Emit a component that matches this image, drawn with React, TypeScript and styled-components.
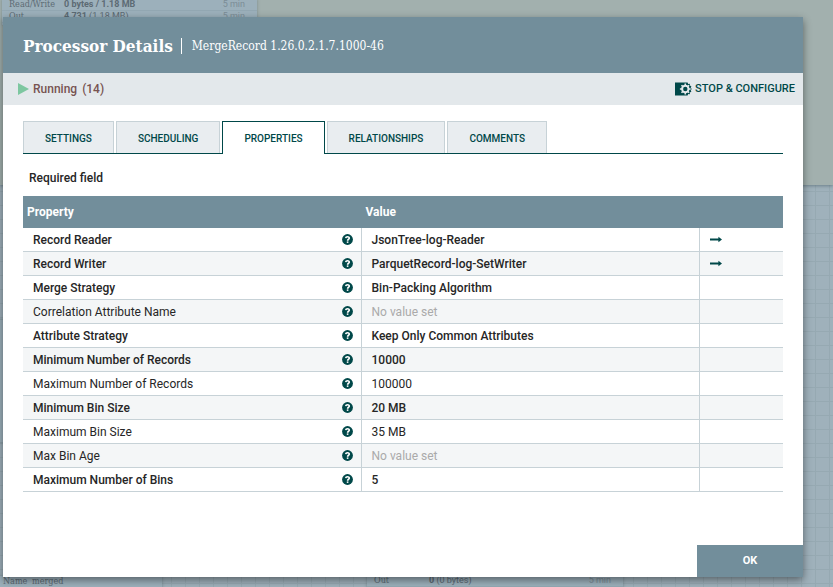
import React, { useState } from "react";
import styled, { createGlobalStyle } from "styled-components";

const slate = "#728e9b";
const teal = "#004849";
const line = "#c7d2d7";
const slab = `"DejaVu Serif Condensed", "DejaVu Serif", serif`;

const GlobalStyle = createGlobalStyle`
  *, *::before, *::after { box-sizing: border-box; }
  body {
    margin: 0;
    font-family: Roboto, sans-serif;
    font-size: 12px;
    color: #262626;
  }
`;

const Page = styled.div`
  position: relative;
  display: flex;
  min-height: 100vh;
  padding: 17px 30px 10px 3px;
  overflow: hidden;
`;

/* Flow canvas behind the dialog: every node has its own place on it. */
const Canvas = styled.div`
  position: absolute;
  inset: 0;
  overflow: hidden;
  background-color: #9fb1bb;
  background-image:
    linear-gradient(to right, #96a9b2 1px, transparent 1px),
    linear-gradient(to bottom, #96a9b2 1px, transparent 1px);
  background-size: 14px 14px;
  background-position: 3px 9px;
`;

const Region = styled.div`
  position: absolute;
  left: 0;
  right: 0;
  top: 0;
  height: 185px;
  background: #a2b0ae;
  box-shadow: 0 1px 3px rgba(60, 80, 90, 0.5);
`;

const Node = styled.div<{ $x: number; $y: number; $w: number; $h?: number }>`
  position: absolute;
  left: ${(p) => p.$x}px;
  top: ${(p) => p.$y}px;
  width: ${(p) => p.$w}px;
  height: ${(p) => p.$h ?? 26}px;
  background: #9cb0bb;
  box-shadow: 0 0 3px rgba(60, 80, 90, 0.4);
  font-size: 9px;
  line-height: 10px;
  color: #5c6b74;
`;

const Stat = styled.div<{ $label?: number }>`
  display: grid;
  grid-template-columns: ${(p) => p.$label ?? 55}px 1fr auto;
  height: 12px;
  padding: 0 12px 0 7px;
  border-bottom: 1px solid #93a8b3;
`;

const StatName = styled.span`
  font-family: ${slab};
  font-size: 9px;
`;

const StatTime = styled.span`
  color: #7b8c96;
`;

const Dialog = styled.section`
  position: relative;
  flex: 1;
  display: flex;
  flex-direction: column;
  background: #fff;
  box-shadow: 0 3px 8px rgba(0, 0, 0, 0.45);
`;

const Header = styled.header`
  display: flex;
  align-items: center;
  height: 56px;
  padding: 2px 20px 0;
  background: ${slate};
  color: #fff;
  font-family: ${slab};
`;

const Title = styled.h1`
  margin: 0;
  font-size: 17px;
  line-height: 24px;
  font-weight: 700;
`;

const Subtitle = styled.span`
  margin-left: 8px;
  padding-left: 10px;
  border-left: 1px solid #fff;
  font-size: 12px;
  line-height: 16px;
`;

const StatusBar = styled.div`
  display: flex;
  align-items: center;
  justify-content: space-between;
  height: 32px;
  padding: 0 8px 0 15px;
  background: #e3e8eb;
`;

const Status = styled.div`
  display: flex;
  align-items: center;
  gap: 4px;
  color: #775351;
  font-weight: 500;
`;

const Count = styled.span`
  margin-left: 1px;
`;

const PlainButton = styled.button`
  display: flex;
  align-items: center;
  gap: 3px;
  padding: 0;
  border: 0;
  background: none;
  color: ${teal};
  font: 500 11px/16px Roboto, sans-serif;
  cursor: pointer;
`;

const Body = styled.div`
  flex: 1;
  padding: 16px 20px;
`;

const Tabs = styled.div`
  display: flex;
  gap: 2px;
  height: 33px;
  border-bottom: 1px solid ${teal};
`;

const Tab = styled.button<{ $active: boolean }>`
  height: ${(p) => (p.$active ? 33 : 32)}px;
  padding: 2px 21px 0;
  border: 1px solid ${(p) => (p.$active ? teal : line)};
  border-bottom: 0;
  background: ${(p) => (p.$active ? "#fff" : "#e9edf0")};
  color: ${teal};
  font: 500 10px/16px Roboto, sans-serif;
  cursor: pointer;
`;

const Required = styled.p`
  margin: 16px 6px 10px;
  font-size: 12px;
  line-height: 16px;
  font-weight: 500;
`;

const Table = styled.table`
  width: 100%;
  table-layout: fixed;
  border-collapse: separate;
  border-spacing: 0;
  font-size: 12px;
  line-height: 16px;
`;

const LinkCol = styled.col`
  width: 83px;
`;

const HeadCell = styled.th`
  height: 32px;
  padding: 0 4px;
  background: ${slate};
  color: #fff;
  font-weight: 700;
  text-align: left;
`;

const Row = styled.tr<{ $required: boolean }>`
  font-weight: ${(p) => (p.$required ? 500 : 400)};
  &:nth-child(even) {
    background: #f4f6f7;
  }
`;

const Cell = styled.td<{ $unset?: boolean }>`
  height: 24px;
  padding: 0 8px 0 10px;
  border-bottom: 1px solid ${line};
  border-right: 1px solid ${line};
  color: ${(p) => (p.$unset ? "#aaa" : "inherit")};
  &:last-child {
    border-right: 0;
  }
`;

const NameLine = styled.div`
  display: flex;
  align-items: center;
  justify-content: space-between;
`;

const IconButton = styled.button`
  display: block;
  padding: 0;
  border: 0;
  background: none;
  color: ${teal};
  cursor: pointer;
  svg {
    display: block;
  }
`;

const Footer = styled.footer`
  display: flex;
  justify-content: flex-end;
`;

const OkButton = styled.button`
  width: 106px;
  height: 32px;
  border: 0;
  background: ${slate};
  color: #fff;
  font: 700 11px/16px Roboto, sans-serif;
  cursor: pointer;
`;

const PlayIcon = () => (
  <svg width="11" height="12" viewBox="0 0 11 12" aria-hidden="true">
    <path d="M0 0L11 6L0 12Z" fill="#7dc7a0" />
  </svg>
);

const ConfigureIcon = () => (
  <svg width="17" height="14" viewBox="0 0 17 14" aria-hidden="true">
    <path
      d="M0 0.5H12.6L13.2 2L14.8 1.8L15 3.6L16.4 4.4L15.6 5.9L17 7L15.6 8.1L16.4 9.6L15 10.4L14.8 12.2L13.2 12L12.6 13.5H0Z"
      fill={teal}
    />
    <g stroke="#e3e8eb" fill="none">
      <circle cx="10.3" cy="7" r="3.2" strokeWidth="2" />
      <path
        d="M10.3 1.6V4M10.3 10V12.4M4.9 7H7.3M13.3 7H15.7M6.5 3.2L8.2 4.9M12.4 9.1L14.1 10.8M6.5 10.8L8.2 9.1M12.4 4.9L14.1 3.2"
        strokeWidth="1.6"
      />
    </g>
  </svg>
);

const HelpIcon = () => (
  <svg width="11" height="11" viewBox="0 0 11 11" aria-hidden="true">
    <circle cx="5.5" cy="5.5" r="5.4" fill={teal} />
    <path d="M3.7 4.2C3.9 2.2 7.3 2.2 7.3 4.1C7.3 5.3 5.6 5.2 5.6 6.7" fill="none" stroke="#fff" strokeWidth="1.6" />
    <rect x="4.8" y="7.4" width="1.6" height="1.5" fill="#fff" />
  </svg>
);

const ArrowIcon = () => (
  <svg width="12" height="7" viewBox="0 0 12 7" aria-hidden="true">
    <path d="M0 2.6H8.4V0.8L12 3.5L8.4 6.2V4.4H0Z" fill={teal} />
  </svg>
);

type Property = { name: string; value?: string; required?: boolean; link?: boolean };

const properties: Property[] = [
  { name: "Record Reader", value: "JsonTree-log-Reader", required: true, link: true },
  { name: "Record Writer", value: "ParquetRecord-log-SetWriter", required: true, link: true },
  { name: "Merge Strategy", value: "Bin-Packing Algorithm", required: true },
  { name: "Correlation Attribute Name" },
  { name: "Attribute Strategy", value: "Keep Only Common Attributes", required: true },
  { name: "Minimum Number of Records", value: "10000", required: true },
  { name: "Maximum Number of Records", value: "100000" },
  { name: "Minimum Bin Size", value: "20 MB", required: true },
  { name: "Maximum Bin Size", value: "35 MB" },
  { name: "Max Bin Age" },
  { name: "Maximum Number of Bins", value: "5", required: true },
];

const tabs = ["SETTINGS", "SCHEDULING", "PROPERTIES", "RELATIONSHIPS", "COMMENTS"];

export default function App() {
  const [active, setActive] = useState("PROPERTIES");
  return (
    <Page>
      <GlobalStyle />
      <Canvas aria-hidden="true">
        <Region />
        <Node $x={2} $y={-1} $w={255}>
          <Stat>
            <StatName>Read/Write</StatName>
            <b>0 bytes / 1.18 MB</b>
            <StatTime>5 min</StatTime>
          </Stat>
          <Stat>
            <StatName>Out</StatName>
            <span><b>4,731</b> (1.18 MB)</span>
            <StatTime>5 min</StatTime>
          </Stat>
        </Node>
        <Node $x={-5} $y={320} $w={167} $h={122} />
        <Node $x={-4} $y={576} $w={166}>
          <Stat $label={29}>
            <StatName>Name</StatName>
            <StatName>merged</StatName>
          </Stat>
        </Node>
        <Node $x={367} $y={575} $w={256}>
          <Stat>
            <StatName>Out</StatName>
            <span><b>0</b> (0 bytes)</span>
            <StatTime>5 min</StatTime>
          </Stat>
        </Node>
      </Canvas>
      <Dialog role="dialog" aria-labelledby="dialog-title">
        <Header>
          <Title id="dialog-title">Processor Details</Title>
          <Subtitle>MergeRecord 1.26.0.2.1.7.1000-46</Subtitle>
        </Header>
        <StatusBar>
          <Status>
            <PlayIcon />
            <span>Running</span>
            <Count>(14)</Count>
          </Status>
          <PlainButton type="button">
            <ConfigureIcon />
            STOP &amp; CONFIGURE
          </PlainButton>
        </StatusBar>
        <Body>
          <Tabs role="tablist">
            {tabs.map((t) => (
              <Tab
                key={t}
                type="button"
                role="tab"
                aria-selected={t === active}
                $active={t === active}
                onClick={() => setActive(t)}
              >
                {t}
              </Tab>
            ))}
          </Tabs>
          <Required>Required field</Required>
          <Table>
            <colgroup>
              <col />
              <col />
              <LinkCol />
            </colgroup>
            <thead>
              <tr>
                <HeadCell scope="col">Property</HeadCell>
                <HeadCell scope="col">Value</HeadCell>
                <HeadCell />
              </tr>
            </thead>
            <tbody>
              {properties.map((p) => (
                <Row key={p.name} $required={!!p.required}>
                  <Cell>
                    <NameLine>
                      {p.name}
                      <IconButton type="button" aria-label={`About ${p.name}`}>
                        <HelpIcon />
                      </IconButton>
                    </NameLine>
                  </Cell>
                  <Cell $unset={!p.value}>{p.value ?? "No value set"}</Cell>
                  <Cell>
                    {p.link && (
                      <IconButton type="button" aria-label={`Go to ${p.value}`}>
                        <ArrowIcon />
                      </IconButton>
                    )}
                  </Cell>
                </Row>
              ))}
            </tbody>
          </Table>
        </Body>
        <Footer>
          <OkButton type="button">OK</OkButton>
        </Footer>
      </Dialog>
    </Page>
  );
}
